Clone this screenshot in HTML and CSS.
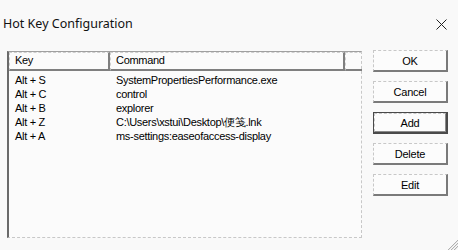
FILE: index.html
```html
<!DOCTYPE html>
<html>
<head>
<meta charset="utf-8">
<link rel="stylesheet" href="styles.css">
</head>
<body>
<div class="dialog">
  <div class="titlebar">
    <span class="title">Hot Key Configuration</span>
    <svg class="close" width="11" height="11" viewBox="0 0 11 11"><path d="M0.5 0.5L10.5 10.5M10.5 0.5L0.5 10.5" stroke="#222" stroke-width="1" fill="none"/></svg>
  </div>
  <div class="content">
    <div class="listbox">
      <div class="header">
        <div class="hcell key">Key</div>
        <div class="hcell cmd">Command</div>
        <div class="hcell fill"></div>
      </div>
      <div class="rows">
        <div class="row"><span class="ckey">Alt + S</span><span class="ccmd">SystemPropertiesPerformance.exe</span></div>
        <div class="row"><span class="ckey">Alt + C</span><span class="ccmd">control</span></div>
        <div class="row"><span class="ckey">Alt + B</span><span class="ccmd">explorer</span></div>
        <div class="row"><span class="ckey">Alt + Z</span><span class="ccmd">C:\Users\xstui\Desktop\便笺.lnk</span></div>
        <div class="row"><span class="ckey">Alt + A</span><span class="ccmd">ms-settings:easeofaccess-display</span></div>
      </div>
    </div>
    <div class="buttons">
      <div class="btn">OK</div>
      <div class="btn">Cancel</div>
      <div class="btn default"><div class="inner">Add</div></div>
      <div class="btn">Delete</div>
      <div class="btn">Edit</div>
    </div>
  </div>
  <svg class="grip" width="12" height="12" viewBox="0 0 12 12"><path d="M12 2L2 12M12 5L5 12M12 8L8 12" stroke="#b0b0b0" stroke-width="1" fill="none"/><path d="M12 3L3 12M12 6L6 12M12 9L9 12" stroke="#e8e8e8" stroke-width="1" fill="none"/></svg>
</div>
</body>
</html>
```

FILE: styles.css
```css
html, body {
  margin: 0;
  padding: 0;
  background: #f9f9f9;
}
.dialog {
  position: relative;
  width: 458px;
  height: 250px;
  overflow: hidden;
  display: flex;
  flex-direction: column;
  font-family: "Liberation Sans", Arial, sans-serif;
  font-size: 11px;
  color: #000;
}
.titlebar {
  height: 51px;
  box-sizing: border-box;
  padding: 16px 11px 0 3px;
  display: flex;
  justify-content: space-between;
  align-items: flex-start;
}
.title {
  font-family: "Noto Sans", "Open Sans", sans-serif;
  font-size: 12.5px;
  line-height: 16px;
  color: #111;
}
.close {
  margin-top: 3px;
}
.content {
  display: flex;
  padding-left: 7px;
}
.listbox {
  width: 355px;
  height: 187px;
  box-sizing: border-box;
  border-left: 2px solid #6a6a6a;
  border-top: 1px solid #a0a0a0;
  border-right: 1px dashed #c8c8c8;
  border-bottom: 1px dashed #c8c8c8;
  background: #fbfbfb;
  display: flex;
  flex-direction: column;
}
.header {
  display: flex;
  height: 19px;
  margin-right: -1px;
}
.hcell {
  box-sizing: border-box;
  height: 19px;
  border-top: 1px dashed #cfcfcf;
  border-left: 1px dashed #cfcfcf;
  border-right: 2px solid #7f7f7f;
  border-bottom: 2px solid #7f7f7f;
  padding-left: 5px;
  line-height: 15px;
  letter-spacing: -0.3px;
}
.hcell.key {
  width: 101px;
}
.hcell.cmd {
  width: 235px;
}
.hcell.fill {
  flex: 1;
  border-right: none;
}
.rows {
  padding-top: 2px;
}
.row {
  display: flex;
  height: 14px;
  line-height: 14px;
  letter-spacing: -0.3px;
  white-space: nowrap;
}
.ckey {
  width: 101px;
  padding-left: 6px;
  box-sizing: border-box;
}
.ccmd {
  padding-left: 6px;
}
.buttons {
  margin-left: 11px;
  margin-top: -1px;
  display: flex;
  flex-direction: column;
  gap: 9px;
}
.btn {
  width: 75px;
  height: 22px;
  box-sizing: border-box;
  border-top: 1px dashed #c8c8c8;
  border-left: 1px dashed #c8c8c8;
  border-right: 2px solid #7a7a7a;
  border-bottom: 2px solid #7a7a7a;
  background: #fcfcfc;
  display: flex;
  align-items: center;
  justify-content: center;
  letter-spacing: -0.2px;
}
.btn.default {
  border: 1px solid #4a4a4a;
  border-right-width: 2px;
  border-bottom-width: 2px;
}
.btn.default .inner {
  flex: 1;
  align-self: stretch;
  border-top: 1px dashed #c8c8c8;
  border-left: 1px dashed #c8c8c8;
  border-right: 1px solid #8a8a8a;
  border-bottom: 1px solid #8a8a8a;
  display: flex;
  align-items: center;
  justify-content: center;
}
.grip {
  position: absolute;
  right: 0;
  bottom: 0;
}
```
